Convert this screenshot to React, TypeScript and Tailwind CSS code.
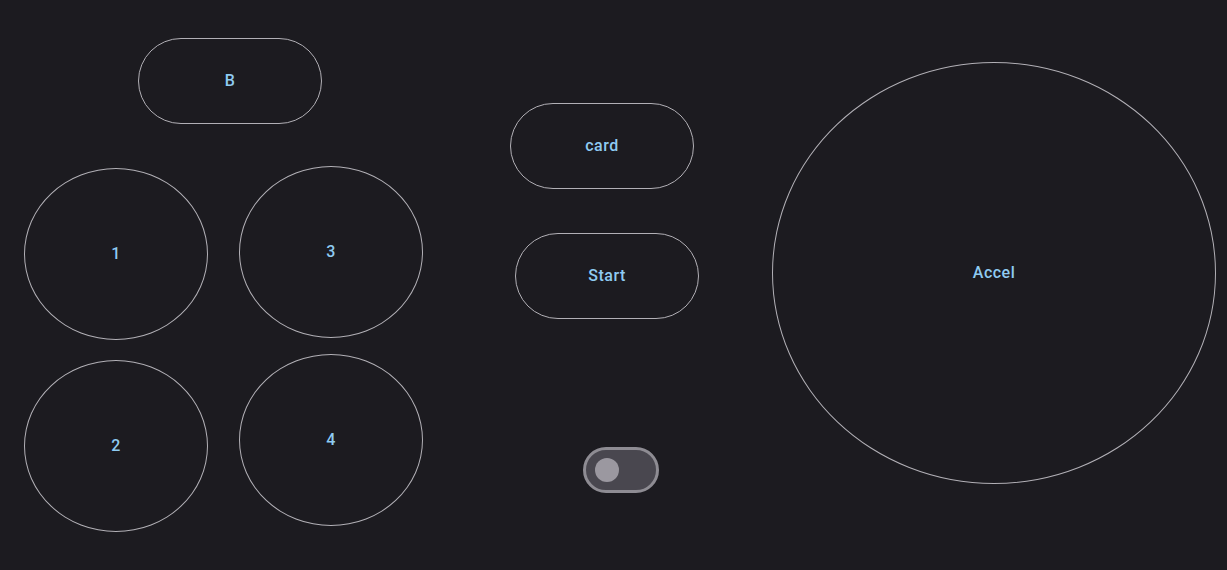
import React, { useState } from 'react';

type PadProps = {
  label: string;
  className: string;
};

const Pad: React.FC<PadProps> = ({ label, className }) => (
  <button
    type="button"
    className={`flex shrink-0 items-center justify-center border border-[#b2b0b6] bg-transparent text-[16px] font-medium tracking-[0.5px] text-[#8fcbf2] ${className}`}
  >
    {label}
  </button>
);

const App: React.FC = () => {
  const [motion, setMotion] = useState(false);

  return (
    <div
      className="flex h-[570px] w-[1227px] overflow-hidden bg-[#1c1b20]"
      style={{ fontFamily: 'Roboto, "Noto Sans", sans-serif' }}
    >
      {/* Face buttons */}
      <div className="ml-[24px] flex w-[399px] flex-col">
        <Pad label="B" className="ml-[114px] mt-[38px] h-[86px] w-[184px] rounded-full" />
        <div className="mt-[42px] flex items-start gap-[31px]">
          <Pad label="1" className="mt-[2px] h-[172px] w-[184px] rounded-[50%]" />
          <Pad label="3" className="h-[172px] w-[184px] rounded-[50%]" />
        </div>
        <div className="mt-[14px] flex items-start gap-[31px]">
          <Pad label="2" className="mt-[6px] h-[172px] w-[184px] rounded-[50%]" />
          <Pad label="4" className="h-[172px] w-[184px] rounded-[50%]" />
        </div>
      </div>

      {/* Middle controls */}
      <div className="ml-[87px] flex w-[189px] flex-col">
        <Pad label="card" className="mt-[103px] h-[86px] w-[184px] rounded-full" />
        <Pad label="Start" className="ml-[5px] mt-[44px] h-[86px] w-[184px] rounded-full" />
        <button
          type="button"
          onClick={() => setMotion(!motion)}
          className="ml-[73px] mt-[128px] flex h-[46px] w-[76px] items-center rounded-full border-[3px] border-[#8e8c93] bg-[#49474f] px-[9px]"
        >
          <span className="h-[24px] w-[24px] rounded-full bg-[#9b98a0]" />
        </button>
      </div>

      {/* Accelerator */}
      <Pad label="Accel" className="ml-[73px] mt-[62px] h-[422px] w-[444px] rounded-[50%]" />
    </div>
  );
};

export default App;
